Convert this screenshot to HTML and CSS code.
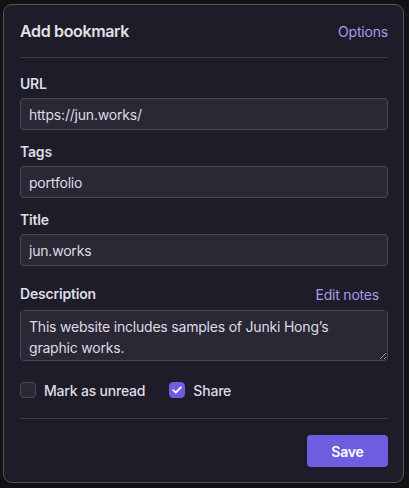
FILE: index.html
```html
<!DOCTYPE html>
<html>
<head>
<meta charset="utf-8">
<link rel="stylesheet" href="styles.css">
</head>
<body>
<div class="popup">
  <div class="header">
    <h1 class="title">Add bookmark</h1>
    <a class="link">Options</a>
  </div>
  <div class="body">
    <div class="field">
      <label class="label">URL</label>
      <input class="input" type="text" value="https://jun.works/">
    </div>
    <div class="field">
      <label class="label">Tags</label>
      <input class="input" type="text" value="portfolio">
    </div>
    <div class="field">
      <label class="label">Title</label>
      <input class="input" type="text" value="jun.works">
    </div>
    <div class="field field-desc">
      <div class="label-row">
        <label class="label">Description</label>
        <a class="link link-notes">Edit notes</a>
      </div>
      <textarea class="textarea">This website includes samples of Junki Hong’s graphic works.</textarea>
    </div>
    <div class="checks">
      <label class="check"><span class="box"></span>Mark as unread</label>
      <label class="check"><span class="box box-on"><svg width="10" height="8" viewBox="0 0 10 8"><path d="M1.2 4.2 L3.8 6.6 L8.8 1.4" fill="none" stroke="#fff" stroke-width="1.8" stroke-linecap="round" stroke-linejoin="round"/></svg></span>Share</label>
    </div>
  </div>
  <div class="footer">
    <button class="save">Save</button>
  </div>
</div>
</body>
</html>
```
FILE: styles.css
```css
html, body {
  margin: 0;
  padding: 0;
  background: #121214;
  font-family: Inter, "Noto Sans", sans-serif;
  color: #dddce4;
}
body {
  padding: 4px 5px 5px 3px;
  height: 488px;
  box-sizing: border-box;
}
.popup {
  width: 401px;
  height: 479px;
  box-sizing: border-box;
  background: #1e1c28;
  border: 1px solid #54535a;
  border-radius: 9px;
  padding: 0 15px 0 16px;
  display: flex;
  flex-direction: column;
}
.header {
  display: flex;
  justify-content: space-between;
  align-items: center;
  height: 52px;
  border-bottom: 1px solid #3e3c48;
}
.title {
  margin: 0;
  font-size: 16px;
  font-weight: 600;
  color: #e2e1e8;
  letter-spacing: -0.35px;
}
.link {
  font-size: 14px;
  color: #a79be8;
  letter-spacing: -0.2px;
}
.body {
  padding-top: 16px;
  display: flex;
  flex-direction: column;
}
.field {
  display: flex;
  flex-direction: column;
  gap: 4px;
  margin-bottom: 12px;
}
.field-desc {
  margin-top: 6px;
  gap: 6px;
}
.label-row {
  display: flex;
  justify-content: space-between;
  align-items: center;
}
.link-notes {
  margin-right: 9px;
}
.label {
  font-size: 14px;
  font-weight: 600;
  line-height: 20px;
  color: #dddce4;
  letter-spacing: -0.2px;
}
.input, .textarea {
  box-sizing: border-box;
  width: 100%;
  background: #2a2835;
  border: 1px solid #4a4855;
  border-radius: 4px;
  color: #dddce4;
  font-family: Inter, "Noto Sans", sans-serif;
  font-size: 14px;
  letter-spacing: -0.2px;
  padding: 0 8px;
  outline: none;
}
.input {
  height: 32px;
}
.textarea {
  height: 51px;
  padding: 5px 8px;
  line-height: 21px;
  resize: vertical;
  display: block;
}
.checks {
  display: flex;
  gap: 24px;
  align-items: center;
  margin-top: 7px;
  height: 20px;
}
.check {
  display: flex;
  align-items: center;
  gap: 8px;
  font-size: 14px;
  font-weight: 500;
  color: #dddce4;
  letter-spacing: -0.2px;
}
.box {
  width: 16px;
  height: 16px;
  box-sizing: border-box;
  border: 1px solid #4a4855;
  background: #2a2835;
  border-radius: 4px;
  display: flex;
  align-items: center;
  justify-content: center;
}
.box-on {
  background: #6d5ee0;
  border-color: #6d5ee0;
}
.footer {
  margin-top: 18px;
  border-top: 1px solid #3e3c48;
  padding-top: 16px;
  display: flex;
  justify-content: flex-end;
}
.save {
  width: 81px;
  height: 32px;
  border: none;
  border-radius: 4px;
  background: #6d5ee0;
  color: #fff;
  font-family: Inter, "Noto Sans", sans-serif;
  font-size: 14px;
  font-weight: 600;
  letter-spacing: -0.2px;
}
```
